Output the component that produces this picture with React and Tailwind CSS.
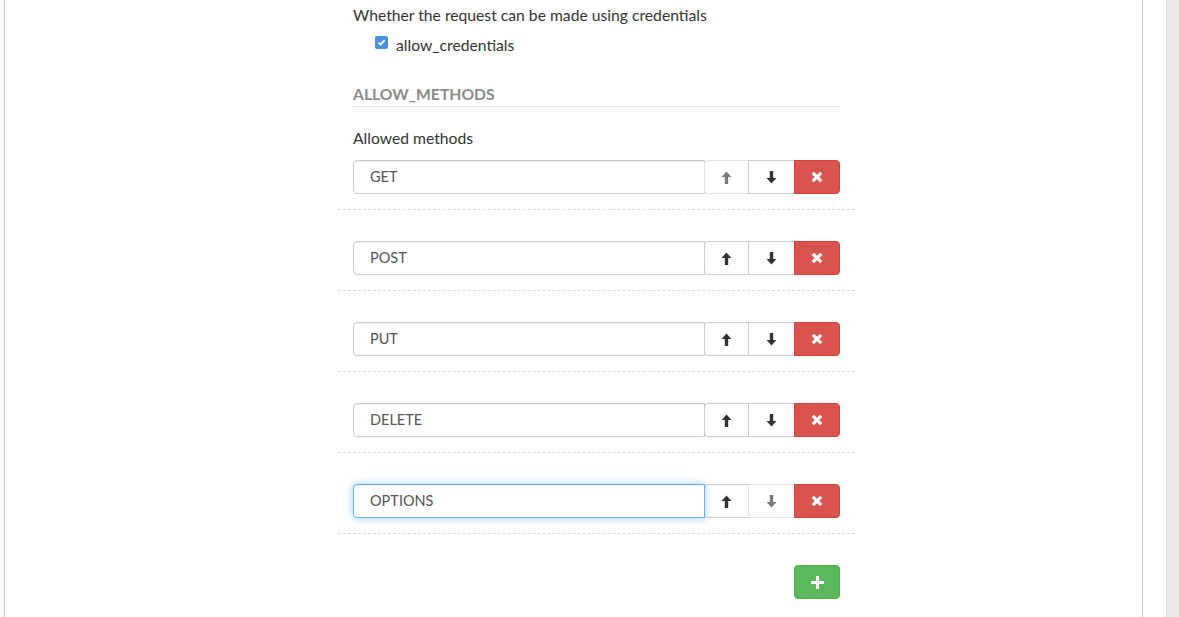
import React from 'react';

const ArrowUp = () => (
  <svg width="11" height="13" viewBox="0 0 11 13">
    <path d="M5.5 0.5 L10.5 6 L7.2 6 L7.2 13 L3.8 13 L3.8 6 L0.5 6 Z" fill="currentColor" />
  </svg>
);

const ArrowDown = () => (
  <svg width="11" height="13" viewBox="0 0 11 13">
    <path d="M5.5 12.5 L10.5 7 L7.2 7 L7.2 0 L3.8 0 L3.8 7 L0.5 7 Z" fill="currentColor" />
  </svg>
);

const RemoveIcon = () => (
  <svg width="12" height="12" viewBox="0 0 12 12">
    <path d="M1.8 1.8 L10.2 10.2 M10.2 1.8 L1.8 10.2" stroke="#fff" strokeWidth="3.2" strokeLinecap="butt" />
  </svg>
);

const PlusIcon = () => (
  <svg width="13" height="13" viewBox="0 0 13 13">
    <path d="M5 0 H8 V5 H13 V8 H8 V13 H5 V8 H0 V5 H5 Z" fill="#fff" />
  </svg>
);

const methods = ['GET', 'POST', 'PUT', 'DELETE', 'OPTIONS'];

const MethodRow = ({ value, first, last }) => (
  <div className="border-b border-dashed border-[#dcdcdc] px-[15px] pb-[15px] mb-[31px]">
    <div className="flex h-[34px]">
      <div
        className={
          last
            ? 'flex-1 flex items-center pl-[16px] border border-[#66afe9] rounded-l-[4px] bg-white text-[14.5px] text-[#555] shadow-[inset_0_1px_1px_rgba(0,0,0,0.075),0_0_8px_rgba(102,175,233,0.6)] relative z-10'
            : 'flex-1 flex items-center pl-[16px] border border-[#ccc] rounded-l-[4px] bg-white text-[14.5px] text-[#555] shadow-[inset_0_1px_1px_rgba(0,0,0,0.075)]'
        }
      >
        {value}
      </div>
      <button
        className={
          first
            ? '-ml-px w-[45px] flex items-center justify-center border border-[#e4e4e4] rounded-l-[4px] bg-white text-[#7a7a7a]'
            : '-ml-px w-[45px] flex items-center justify-center border border-[#ccc] rounded-l-[4px] bg-white text-[#333]'
        }
      >
        <ArrowUp />
      </button>
      <button
        className={
          last
            ? '-ml-px w-[47px] flex items-center justify-center border border-[#e4e4e4] bg-white text-[#7a7a7a]'
            : '-ml-px w-[47px] flex items-center justify-center border border-[#ccc] bg-white text-[#333]'
        }
      >
        <ArrowDown />
      </button>
      <button className="-ml-px w-[46px] flex items-center justify-center border border-[#d43f3a] rounded-r-[4px] bg-[#d9534f]">
        <RemoveIcon />
      </button>
    </div>
  </div>
);

export default function App() {
  return (
    <div className="flex h-[617px] overflow-hidden bg-[#fdfdfd] font-['Lato','Open_Sans',sans-serif] text-[#333]">
      <div className="w-[4px] shrink-0" />
      <div className="w-[1139px] shrink-0 border-x border-[#c8c8c8] bg-white">
        <div className="ml-[333px] w-[517px]">
          <div className="px-[15px]">
            <p className="text-[15.7px] leading-[20px] pt-[5px]">Whether the request can be made using credentials</p>
            <label className="flex items-center ml-[22px] mt-[10px] text-[15.7px] leading-[20px]">
              <span className="w-[13px] h-[13px] rounded-[2px] bg-[#4a90e2] flex items-center justify-center -mt-[5px]">
                <svg width="9" height="9" viewBox="0 0 9 9">
                  <path d="M1.5 4.6 L3.6 6.7 L7.6 2.2" stroke="#fff" strokeWidth="1.8" fill="none" />
                </svg>
              </span>
              <span className="ml-[8px]">allow_credentials</span>
            </label>
            <div className="mt-[29px] border-b border-[#e5e5e5] pb-[2px]">
              <h4 className="text-[15.7px] leading-[20px] font-bold text-[#8a8a8a]">ALLOW_METHODS</h4>
            </div>
            <p className="mt-[21px] text-[15.7px] leading-[20px]">Allowed methods</p>
          </div>
          <div className="mt-[12px]">
            {methods.map((m, i) => (
              <MethodRow key={m} value={m} first={i === 0} last={i === methods.length - 1} />
            ))}
          </div>
          <div className="px-[15px] flex justify-end">
            <button className="w-[46px] h-[34px] flex items-center justify-center border border-[#4cae4c] rounded-[4px] bg-[#5cb85c]">
              <PlusIcon />
            </button>
          </div>
        </div>
      </div>
      <div className="w-[23px] shrink-0 bg-white" />
      <div className="flex-1 border-l border-[#e0e0e0] bg-[#ebebeb]" />
    </div>
  );
}
